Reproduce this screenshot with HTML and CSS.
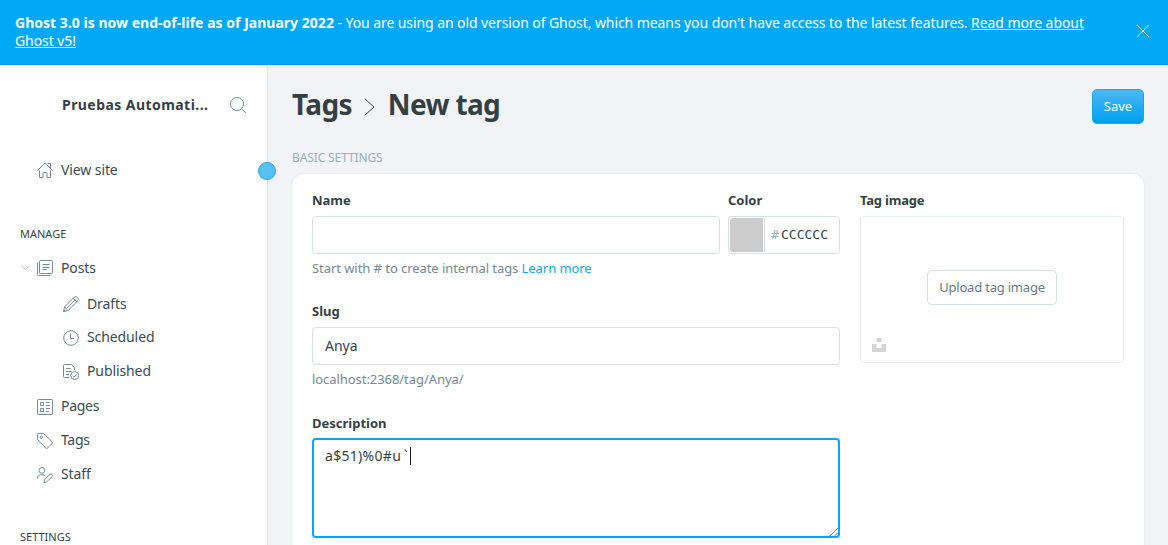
FILE: index.html
```html
<!DOCTYPE html>
<html lang="en">
<head>
<meta charset="utf-8">
<title>Tags - New tag</title>
<link rel="stylesheet" href="styles.css">
</head>
<body>
<div class="banner">
  <p class="banner-text"><b>Ghost 3.0 is now end-of-life as of January 2022</b> <span class="banner-copy">- You are using an old version of Ghost, which means you don't have access to the latest features. <a>Read more about<br>Ghost v5!</a></span></p>
  <svg class="close" viewBox="0 0 12 12"><path d="M0 0L12 12M12 0L0 12"/></svg>
</div>
<div class="app">
  <nav class="sidebar">
    <div class="site-head">
      <span class="site-name">Pruebas Automati...</span>
      <svg class="icon search" viewBox="0 0 16 16"><circle cx="7" cy="7" r="6.5"/><path d="M11.6 11.6L16 16"/></svg>
    </div>
    <a class="item view-site"><svg class="icon" viewBox="0 0 16 16"><path d="M.4 8.6L8 1l7.6 7.6M10.5 1.5h3v5M2.5 8.5v7h3.500v-4.500q0-.5.5-.5h3q.5 0 .5.5v4.500h3.500v-7"/></svg><span>View site</span></a>
    <h2 class="group">MANAGE</h2>
    <a class="item posts"><svg class="chevron" viewBox="0 0 10 6"><path d="M.5.5L5 5 9.500.5"/></svg><svg class="icon" viewBox="0 0 16 16"><rect x="2.500" y=".5" width="13" height="13" rx=".8"/><path d="M.5 2.500V14.500q0 1 1 1H13.500M5.500 4.500h7M5.500 7.500h7M5.500 9.500h4"/></svg><span>Posts</span></a>
    <a class="item sub drafts"><svg class="icon" viewBox="0 0 16 16"><path d="M1.600 10.800L11.300 1.100q1.400-1.200 2.900.1l.7.7q1.300 1.500 0 2.900L5.200 14.500.5 15.600zM1.600 10.800L5.200 14.500M3.300 12.600L12.600 3.300M10.200 2.200l3.700 3.700M.5 15.600l1.800-2"/></svg><span>Drafts</span></a>
    <a class="item sub scheduled"><svg class="icon" viewBox="0 0 16 16"><circle cx="8" cy="8" r="7.300"/><path d="M7.500 3.500v5H11"/></svg><span>Scheduled</span></a>
    <a class="item sub published"><svg class="icon" viewBox="0 0 16 16"><path d="M6 13.500H1.500q-1 0-1-1V1.500q0-1 1-1H8.500L11.500 3.500V6M3 4.500h4.500M3 7.500h5.500M3 10.500h3"/><circle cx="11.700" cy="11.500" r="4"/><path d="M9.600 11.800l1.400 1.400 2.600-3.300"/></svg><span>Published</span></a>
    <a class="item pages"><svg class="icon" viewBox="0 0 16 16"><rect x=".5" y=".5" width="15" height="15" rx=".8"/><path d="M3.500 3.500h3v3h-3zM3.500 9.500h3v3h-3zM9 3.500h3.500M9 6.500h4M9 9.500h4M9 12.500h3"/></svg><span>Pages</span></a>
    <a class="item tags"><svg class="icon" viewBox="0 0 16 16"><path d="M.6 1.500q0-.9.900-.9H6.800L15.300 9q.7.700 0 1.300L10.400 15.200q-.7.700-1.400 0L.6 6.800z"/><circle cx="4.200" cy="4.200" r="1.200"/></svg><span>Tags</span></a>
    <a class="item staff"><svg class="icon" viewBox="0 0 16 16"><circle cx="4.900" cy="3.400" r="2.900"/><path d="M.5 11.500q0-3.800 4.400-3.800 2.300 0 3.500 1.400M7.500 12.600l5.500-5.300q1.100-.8 2.100.2.900 1 0 2.100L9.600 14.900l-2.700.6z"/></svg><span>Staff</span></a>
    <h2 class="group settings">SETTINGS</h2>
    <i class="handle"></i>
  </nav>
  <main class="main">
    <header class="head">
      <h1><span class="crumb">Tags</span><svg viewBox="0 0 11 18"><path d="M.7.7L10 9 .7 17.300"/></svg><span class="current">New tag</span></h1>
      <button class="save">Save</button>
    </header>
    <h3 class="section-title">BASIC SETTINGS</h3>
    <section class="card">
      <div class="fields">
        <div class="row">
          <div class="name"><label>Name</label><div class="input"></div></div>
          <div class="color"><label>Color</label><div class="input color-input"><i class="swatch"></i><span class="hash">#</span><span class="hex">CCCCCC</span></div></div>
        </div>
        <p class="hint name-hint">Start with # to create internal tags <a>Learn more</a></p>
        <label>Slug</label>
        <div class="input">Anya</div>
        <p class="hint slug-hint">localhost:2368/tag/Anya/</p>
        <label class="description-label">Description</label>
        <div class="textarea"><span>a$51)%0#<span class="wide">u</span>`</span><i class="caret"></i><svg class="grip" viewBox="0 0 8 8"><path d="M0 8L8 0M4.500 8L8 4.500"/></svg></div>
      </div>
      <div class="image">
        <label class="image-label">Tag image</label>
        <div class="drop"><button class="upload">Upload tag image</button><svg class="unsplash" viewBox="0 0 14 14"><path d="M4.400 0h5.200v4H4.400zM0 6h4.400v4h5.200V6H14v8H0z"/></svg></div>
      </div>
    </section>
  </main>
</div>
</body>
</html>
```
FILE: styles.css
```css
* { box-sizing: border-box; }
body { margin: 0; height: 545px; overflow: hidden; font-family: "Noto Sans", "Open Sans", sans-serif; font-size: 14px; color: #394047; background: #f2f3f7; }
h1, h2, h3, p { margin: 0; }
button { font-family: inherit; }
.banner { height: 65px; display: flex; justify-content: space-between; padding: 14px 19px 0 15px; background: #00a8f5; border-bottom: 1px solid #0996ee; color: #fff; }
.banner-text { line-height: 18px; white-space: nowrap; }
.banner b { letter-spacing: .02px; }
.banner-copy { letter-spacing: -.08px; }
.banner a { text-decoration: underline; }
.close { width: 12px; height: 12px; margin-top: 11px; stroke: #fff; fill: none; stroke-width: .9; }
.app { display: flex; height: 480px; overflow: hidden; }
.sidebar { position: relative; width: 268px; flex: none; background: #fff; border-right: 1px solid #e1e4ec; }
.site-head { height: 40px; margin-top: 20px; padding: 0 21px 0 62px; display: flex; align-items: center; justify-content: space-between; }
.site-name { padding-bottom: 2px; font-weight: 700; letter-spacing: .44px; white-space: nowrap; color: #343f44; }
.icon { width: 16px; height: 16px; flex: none; fill: none; stroke: #738a94; stroke-width: 1; }
.item { height: 34px; padding-left: 37px; display: flex; align-items: center; gap: 8px; color: #394b52; letter-spacing: -.1px; }
.item span { padding-bottom: 2px; }
.view-site { margin-top: 28px; }
.group { height: 20px; margin-top: 37px; padding-left: 20px; font-size: 11px; line-height: 20px; font-weight: 400; color: #343f44; }
.posts { margin-top: 7px; padding-left: 21px; }
.posts .chevron { width: 9px; height: 6px; margin-right: -1px; fill: none; stroke: #a9bac2; }
.sub { padding-left: 63px; }
.drafts { margin-top: 2px; }
.scheduled span, .published span, .pages span, .tags span, .staff span { padding-bottom: 4px; }
.pages, .tags { letter-spacing: -.3px; }
.pages { margin-top: 1px; }
.settings { margin-top: 35px; }
.handle { position: absolute; left: 258px; top: 97px; width: 18px; height: 18px; border-radius: 50%; background: #57c1f7; border: 1px solid #16a8f5; }
.main { flex: 1; padding: 0 24px; }
.head { height: 80px; display: flex; align-items: center; justify-content: space-between; }
h1 { display: flex; align-items: center; margin-top: -2px; font-size: 28px; line-height: 40px; letter-spacing: -.65px; color: #343f44; }
h1 svg { width: 11px; height: 18px; margin: 5px 13px 0 12px; fill: none; stroke: #343f44; stroke-width: 1; }
.save { width: 52px; height: 35px; margin-top: 2px; padding: 0; border: 1px solid #14a5f3; border-radius: 5px; background: linear-gradient(#4ab8f6, #00a0f0); color: #fff; font-size: 13px; }
.section-title { height: 29px; padding-top: 3px; font-size: 12px; line-height: 20px; font-weight: 400; letter-spacing: -.12px; color: #9baeb8; }
.card { height: 430px; border-radius: 12px; padding: 16px 20px; background: #fff; display: flex; gap: 20px; box-shadow: 0 0 2px rgba(30, 60, 90, .1); }
.fields { width: 528px; }
.row { display: flex; gap: 8px; }
.name { width: 408px; }
.color { width: 112px; }
label { display: block; height: 26px; line-height: 21px; font-size: 13px; font-weight: 700; color: #343f44; white-space: nowrap; }
.description-label { height: 25px; }
.image-label { letter-spacing: -.2px; }
.input { height: 38px; border: 1px solid #d3e1e9; border-radius: 4px; padding: 0 12px; line-height: 35px; color: #343f44; }
.color-input { display: flex; padding: 1px; line-height: 34px; font-family: "DejaVu Sans Mono", monospace; font-size: 13px; }
.swatch { width: 33px; border-radius: 3px 0 0 3px; background: #ccc; box-shadow: 1px 0 #fff, 2px 0 #d3e1e9; margin-right: 8px; }
.hash { color: #9baeb8; width: 10px; }
.hint { height: 20px; line-height: 20px; font-size: 13px; letter-spacing: -.06px; color: #738a94; white-space: nowrap; }
.hint a { color: #14a5f3; }
.name-hint { margin: 4px 0 23px; }
.slug-hint { margin: 4px 0 24px; }
.textarea { position: relative; display: flex; height: 100px; border: 2px solid #00a8f5; border-radius: 4px; padding: 6px 11px; line-height: 20px; letter-spacing: .3px; color: #343f44; }
.wide { letter-spacing: 3px; }
.caret { width: 1px; height: 18px; margin: 1px 0 0 2px; background: #111; }
.grip { position: absolute; right: 0; bottom: 0; width: 8px; height: 8px; fill: none; stroke: #555; stroke-width: .8; }
.image { width: 264px; }
.drop { position: relative; height: 147px; display: flex; align-items: center; justify-content: center; border: 1px solid #e2eef5; border-radius: 4px; }
.upload { width: 130px; height: 35px; margin-top: -5px; padding: 0; border: 1px solid #d0e0e8; border-radius: 5px; background: #fff; font-size: 13px; letter-spacing: -.2px; color: #657c88; white-space: nowrap; }
.unsplash { position: absolute; left: 11px; bottom: 10px; width: 14px; height: 14px; fill: #d4d4d4; }
```
